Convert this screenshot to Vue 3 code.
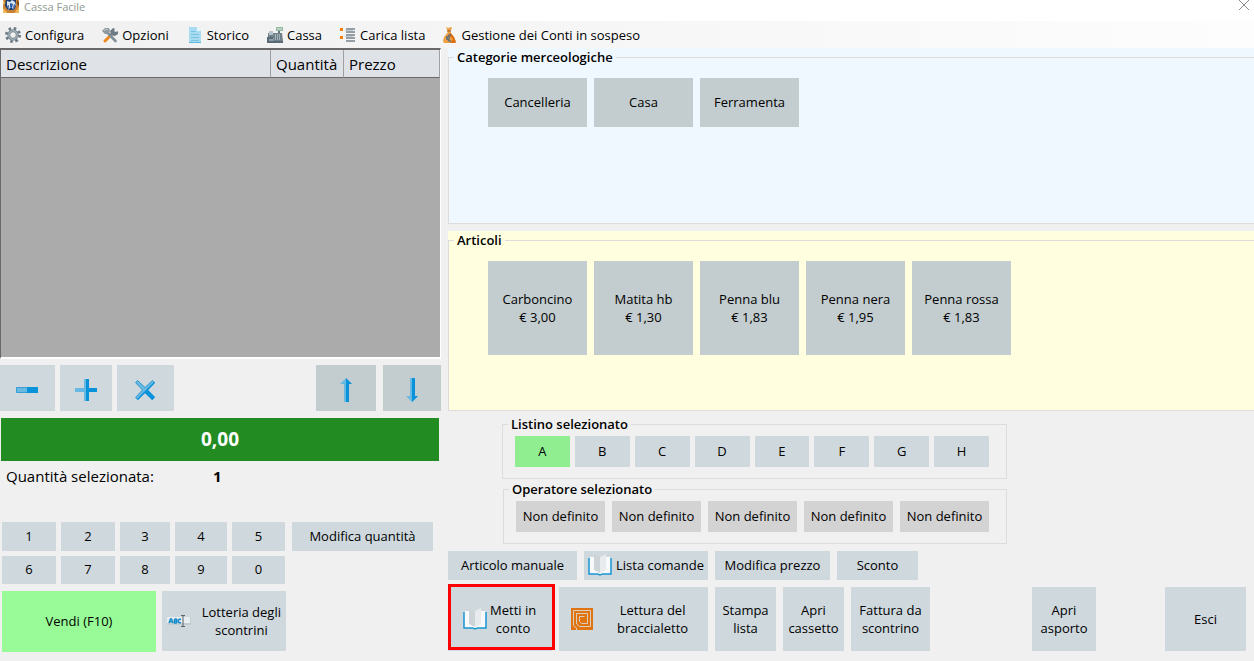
<script setup>
import { ref } from 'vue'

const categories = ['Cancelleria', 'Casa', 'Ferramenta']
const articles = [
  { name: 'Carboncino', price: '€ 3,00' },
  { name: 'Matita hb', price: '€ 1,30' },
  { name: 'Penna blu', price: '€ 1,83' },
  { name: 'Penna nera', price: '€ 1,95' },
  { name: 'Penna rossa', price: '€ 1,83' },
]
const priceLists = ['A', 'B', 'C', 'D', 'E', 'F', 'G', 'H']
const activeList = ref('A')
const operators = Array(5).fill('Non definito')
const digits = ['1', '2', '3', '4', '5', '6', '7', '8', '9', '0']
</script>

<template>
  <div class="window">
    <header class="titlebar">
      <svg class="logo" width="16" height="16" viewBox="0 0 16 16" aria-hidden="true">
        <rect width="16" height="16" fill="#c98232" />
        <path d="M3 1h10v8l-2 4H5l-3-4z" fill="#1f3c6e" />
        <path d="M4 4l3 1 2-2 3 2 1 4-2-2-1 5-2-2-3 3 1-5-2 1z" fill="#d9e4f2" />
        <path d="M7 6l3 1-1 4-2-1z" fill="#2c5fa6" />
        <path d="M4 9l2 3M12 8l-2 5" stroke="#4d7ec0" />
        <path d="M0 11l4 4v1H0zM16 10l-4 5v1h4zM0 3l2 3-2 2z" fill="#f2b65b" />
        <path d="M14 3l2 3v3l-2-2z" fill="#6f4a1c" />
      </svg>
      <span>Cassa Facile</span>
      <button class="close" aria-label="Chiudi">
        <svg width="12" height="12" viewBox="0 0 12 12"><path d="M1 0l10 10M11 0L1 10" stroke="#8a8a8a" fill="none" /></svg>
      </button>
    </header>

    <nav class="menu">
      <button>
        <svg width="16" height="16" viewBox="0 0 16 16">
          <circle cx="8" cy="8" r="6.5" fill="none" stroke="#6b7a84" stroke-width="3" stroke-dasharray="2.5 2.6" />
          <circle cx="8" cy="8" r="4.2" fill="none" stroke="#7b8a94" stroke-width="3" />
          <circle cx="8" cy="8" r="4.2" fill="none" stroke="#b3bec5" stroke-width="1" />
        </svg>
        Configura
      </button>
      <button>
        <svg width="16" height="16" viewBox="0 0 16 16">
          <path d="M3 14l7-7" stroke="#ee8a1d" stroke-width="3" stroke-linecap="round" />
          <path d="M5 5l8.500 9" stroke="#7f8e97" stroke-width="2.600" stroke-linecap="round" />
          <path d="M0 4l3-3 4 0 1 3-2 3-3 0z" fill="#8b999f" />
          <path d="M2 4l2-2 2 1" fill="none" stroke="#c0c9cd" />
          <path d="M8 4l3-3 2 1-1 2 2 1 2-1v3l-3 2-4-1z" fill="#6c7b84" />
        </svg>
        Opzioni
      </button>
      <button>
        <svg width="16" height="16" viewBox="0 0 16 16">
          <path d="M2 0h8l4 4v12H2z" fill="#a9dcf1" />
          <path d="M10 0v4h4z" fill="#e7f7fd" />
          <path d="M4 4.500h5M4 7.500h8M4 10.500h8M4 13.500h8" stroke="#78c3e2" />
          <path d="M2 15.500h12" stroke="#58b7dd" />
        </svg>
        Storico
      </button>
      <button>
        <svg width="16" height="16" viewBox="0 0 16 16">
          <rect x="9" y="0" width="7" height="4" fill="#91b8a0" />
          <path d="M10 2h5" stroke="#d9eddf" />
          <path d="M11 4h2v2h-2z" fill="#65747c" />
          <path d="M1 6h6v5H1zM7 6h8l1 8H6z" fill="#71818a" />
          <path d="M2 4h4v4H2z" fill="#b8c5cc" />
          <path d="M8 8h6M8 10h6M8 12h6" stroke="#d6e1e6" stroke-dasharray="1 1" />
          <path d="M0 10h6v4h10v2H0z" fill="#596b76" />
          <path d="M2 13h4" stroke="#c9d5da" />
        </svg>
        Cassa
      </button>
      <button>
        <svg width="16" height="16" viewBox="0 0 16 16">
          <path d="M0 1h3v3H0zM0 9h3v3H0z" fill="#ef7d0e" />
          <path d="M6 2h9M6 5h9M6 8h9M6 11h9M6 14h9" stroke="#75838b" stroke-width="1.500" />
          <path d="M5 3.500h8M5 9.500h8" stroke="#c4cdd1" />
        </svg>
        Carica lista
      </button>
      <button class="accounts">
        <svg width="13" height="16" viewBox="0 0 13 16">
          <path d="M3 0l2 1 3-1 1 1-2 4 4 5 2 5-1 1H1l-1-2 1-4 4-5z" fill="#efa044" />
          <path d="M7 5l4 5 2 5-1 1H7l3-4-4-3z" fill="#dc7214" />
          <path d="M4 4h4" stroke="#925016" />
          <path d="M8 8H6l-2 3 2 3h2M3 10h4M3 12h4" fill="none" stroke="#66717a" stroke-width="1.300" />
        </svg>
        Gestione dei Conti in sospeso
      </button>
    </nav>

    <main class="body">
      <section class="receipt">
        <div class="grid-view">
          <table>
            <colgroup><col /><col class="col-qty" /><col class="col-price" /></colgroup>
            <thead>
              <tr><th scope="col">Descrizione</th><th scope="col">Quantità</th><th scope="col">Prezzo</th></tr>
            </thead>
            <tbody></tbody>
          </table>
        </div>

        <div class="tools">
          <button class="btn t1" aria-label="Diminuisci">
            <svg width="24" height="24" viewBox="0 0 24 24">
              <path d="M1.500 9.500h21v5h-21z" fill="#68b9e1" stroke="#389fd5" />
              <path d="M12 9h11v6H12z" fill="#0792da" />
            </svg>
          </button>
          <button class="btn t2" aria-label="Aumenta">
            <svg width="24" height="24" viewBox="0 0 24 24">
              <path d="M10 1h5v9h8v4h-8v9h-5v-9H1v-4h9z" fill="#68b9e1" />
              <path d="M12 1h3v9h8v4h-8v9h-3z" fill="#0792da" />
            </svg>
          </button>
          <button class="btn t3" aria-label="Elimina">
            <svg width="24" height="24" viewBox="0 0 24 24">
              <path d="M4.500 2.500l7.500 7 7.500-7 2 2-7 7.500 7 7.500-2 2-7.500-7-7.500 7-2-2 7-7.500-7-7.500z" fill="#68b9e1" stroke="#2c98d2" />
              <path d="M21 4l1 1-7 7 7 7-3 3-7-7-7 7-1-1z" fill="#0792da" />
            </svg>
          </button>
          <button class="btn steel t4" aria-label="Su">
            <svg width="24" height="26" viewBox="0 0 24 26">
              <path d="M12 1l6 6h-3v18h-5V7H6z" fill="#68b9e1" />
              <path d="M12 1l6 6h-3v18h-3z" fill="#0792da" />
            </svg>
          </button>
          <button class="btn steel t5" aria-label="Giù">
            <svg width="24" height="26" viewBox="0 0 24 26">
              <path d="M12 25l6-6h-3V1h-5v18H6z" fill="#68b9e1" />
              <path d="M12 25l6-6h-3V1h-3z" fill="#0792da" />
            </svg>
          </button>
        </div>

        <output class="total">0,00</output>
        <p class="quantity"><span>Quantità selezionata:</span><strong>1</strong></p>

        <div class="keys">
          <div class="pad">
            <button v-for="d in digits" :key="d" class="btn">{{ d }}</button>
          </div>
          <button class="btn modify">Modifica quantità</button>
        </div>

        <div class="sell">
          <button class="btn vendi">Vendi (F10)</button>
          <button class="btn lottery">
            <svg width="24" height="14" viewBox="0 0 24 14">
              <path d="M0 3h24v8H0z" fill="#c2cdcf" />
              <path d="M0 3h23v6H0z" fill="#e8edef" />
              <path d="M2 9l1.500-4h1L6 9M3 7.700h2M7.500 5v4H9q2-1 0-2H7.500M7.500 5H9q2 1 0 2M14 5.500q-2.500-1-2.500 1.500t2.500 1.500" fill="none" stroke="#168bc7" stroke-width="1.500" />
              <path d="M14 1.500h4M14 12.500h4M16 1v12" stroke="#58626b" />
            </svg>
            <span>Lotteria degli<br />scontrini</span>
          </button>
        </div>
      </section>

      <section class="catalog">
        <div class="panel blue">
          <fieldset>
            <legend>Categorie merceologiche</legend>
            <div class="tiles">
              <button v-for="c in categories" :key="c" class="btn steel category">{{ c }}</button>
            </div>
          </fieldset>
        </div>

        <div class="panel yellow">
          <fieldset>
            <legend>Articoli</legend>
            <div class="tiles">
              <button v-for="a in articles" :key="a.name" class="btn steel article">{{ a.name }}<br />{{ a.price }}</button>
            </div>
          </fieldset>
        </div>

        <fieldset class="choice">
          <legend>Listino selezionato</legend>
          <div class="lists">
            <button v-for="l in priceLists" :key="l" class="btn" :class="{ active: l === activeList }" @click="activeList = l">{{ l }}</button>
          </div>
        </fieldset>

        <fieldset class="choice">
          <legend>Operatore selezionato</legend>
          <div class="operators">
            <button v-for="(o, i) in operators" :key="i" class="btn">{{ o }}</button>
          </div>
        </fieldset>

        <div class="row short">
          <button class="btn a1">Articolo manuale</button>
          <button class="btn a2">
            <svg width="24" height="24" viewBox="0 0 24 24">
              <path d="M1 5v16h9l2 1 2-1h9V5" fill="#fafcfd" stroke="#1995d2" stroke-width="1.500" />
              <path d="M2 4h4l6 3 6-3h4v16h-8l-2 1-2-1H2z" fill="#f7f9fa" />
              <path d="M6 1l6 3v16l-6-3z" fill="#cdd4d7" />
              <path d="M12 4l6-3v16l-6 3z" fill="#e7ebed" />
            </svg>
            Lista comande
          </button>
          <button class="btn a3">Modifica prezzo</button>
          <button class="btn a4">Sconto</button>
        </div>

        <div class="row tall">
          <button class="btn b1">
            <svg width="24" height="24" viewBox="0 0 24 24">
              <path d="M1 5v16h9l2 1 2-1h9V5" fill="#fafcfd" stroke="#1995d2" stroke-width="1.500" />
              <path d="M2 4h4l6 3 6-3h4v16h-8l-2 1-2-1H2z" fill="#f7f9fa" />
              <path d="M6 1l6 3v16l-6-3z" fill="#cdd4d7" />
              <path d="M12 4l6-3v16l-6 3z" fill="#e7ebed" />
            </svg>
            <span>Metti in<br />conto</span>
          </button>
          <button class="btn b2">
            <svg width="22" height="22" viewBox="0 0 22 22">
              <path d="M0 0h22v22H0z" fill="#df7410" />
              <path d="M5.500 22v-2l-3-2.500v-15h17v16h-11l-3-2.500V5.500h11v10h-6l-2-2v-5h5" fill="none" stroke="#dccfc0" />
            </svg>
            <span>Lettura del<br />braccialetto</span>
          </button>
          <button class="btn b3">Stampa<br />lista</button>
          <button class="btn b3">Apri<br />cassetto</button>
          <button class="btn b4">Fattura da<br />scontrino</button>
          <button class="btn b5">Apri<br />asporto</button>
          <button class="btn b6">Esci</button>
        </div>
      </section>
    </main>
  </div>
</template>

<style>
body {
  margin: 0;
  background: #f0f0f0;
}
</style>

<style scoped>
.window {
  min-height: 100vh;
  display: flex;
  flex-direction: column;
  background: #f0f0f0;
  color: #000;
  font: 13px/18px "Open Sans", "Noto Sans", sans-serif;
}
.window *, .window *::after {
  box-sizing: border-box;
}
button {
  border: 0;
  padding: 0;
  background: none;
  color: inherit;
  font: inherit;
}
svg {
  display: block;
  flex: none;
}
.titlebar {
  height: 21px;
  display: flex;
  align-items: flex-start;
  gap: 5px;
  padding-left: 3px;
  background: #fff;
  color: #8f9a94;
  font-size: 11px;
  line-height: 13px;
}
.logo {
  margin-top: -3px;
}
.close {
  margin-left: auto;
  margin-right: 4px;
}
.menu {
  height: 27px;
  display: flex;
  align-items: center;
  gap: 18px;
  padding-left: 5px;
  background: linear-gradient(90deg, #f0f0f0, #fdfdfd);
}
.menu button {
  display: flex;
  align-items: center;
  gap: 4px;
  white-space: nowrap;
}
.menu .accounts {
  gap: 5px;
}
.body {
  flex: 1;
  display: grid;
  grid-template-columns: 441px minmax(0, 1fr);
  gap: 7px;
}
.receipt {
  display: flex;
  flex-direction: column;
}
.grid-view {
  height: 311px;
  border: 2px solid;
  border-width: 2px 1px 2px 1px;
  border-color: #696969 #fff #fff #696969;
  background: #ababab;
}
table {
  width: 100%;
  table-layout: fixed;
  border-collapse: separate;
  border-spacing: 0;
}
.col-qty {
  width: 73px;
}
.col-price {
  width: 96px;
}
th {
  height: 28px;
  padding: 0 0 0 5px;
  border-right: 1px solid #a0a0a0;
  border-bottom: 1px solid #696969;
  background: #dfe3e8;
  font-size: 15px;
  font-weight: 400;
  text-align: left;
}
.btn {
  padding-bottom: 2px;
  background: #cfd8dd;
}
.steel {
  background: #c3cdcf;
}
.tools {
  display: flex;
  gap: 5px;
  height: 46px;
  margin-top: 6px;
}
.tools .btn {
  display: flex;
  align-items: center;
  justify-content: center;
  padding: 4px 1px 0 0;
}
.t1 { width: 55px; }
.t2 { width: 52px; }
.t3 { width: 57px; }
.t4 { width: 60px; margin-left: auto; }
.t5 { width: 58px; margin-left: 2px; }
.total {
  margin: 7px 2px 0 1px;
  background: #228b22;
  color: #fff;
  font-size: 19px;
  font-weight: 700;
  line-height: 43px;
  text-align: center;
}
.quantity {
  display: flex;
  margin: 5px 0 36px 6px;
  font-size: 15px;
  line-height: 20px;
}
.quantity span {
  width: 207px;
}
.keys {
  display: flex;
  gap: 7px;
  padding: 0 8px 0 2px;
}
.pad {
  display: grid;
  grid-template-columns: 54px 54px 50px 52px 53px;
  grid-template-rows: 29px 28px;
  gap: 5px;
}
.modify {
  flex: 1;
  height: 29px;
}
.sell {
  display: flex;
  align-items: flex-start;
  gap: 6px;
  margin-top: 7px;
  padding-left: 2px;
}
.vendi {
  width: 154px;
  height: 61px;
  background: #98fb98;
}
.lottery {
  width: 124px;
  height: 60px;
  display: flex;
  align-items: center;
  justify-content: space-between;
  padding: 0 5px;
}
.catalog {
  min-width: 0;
}
fieldset {
  min-width: 0;
  margin: 0;
  padding: 0;
  border: 1px solid #dcdcdc;
}
legend {
  margin-left: 5px;
  padding: 0 3px;
  font-weight: 600;
}
.panel fieldset {
  border-right: 0;
}
.blue {
  background: #f0f8ff;
}
.blue fieldset {
  height: 176px;
}
.yellow {
  margin-top: 7px;
  background: #ffffe0;
}
.yellow fieldset {
  height: 180px;
}
.tiles {
  display: flex;
  flex-wrap: wrap;
  gap: 7px;
  padding: 12px 0 0 39px;
}
.category {
  width: 99px;
  height: 49px;
}
.article {
  width: 99px;
  height: 94px;
  padding: 0;
}
.choice {
  width: 505px;
  height: 64px;
  margin: 4px 0 0 54px;
}
.choice + .choice {
  width: 504px;
  margin: 1px 0 0 55px;
}
.lists {
  display: grid;
  grid-template-columns: repeat(8, 1fr);
  gap: 5px;
  padding: 3px 17px 0 12px;
}
.lists .btn {
  height: 31px;
}
.lists .active {
  background: #90ee90;
}
.operators {
  display: flex;
  gap: 7px;
  padding: 3px 0 0 12px;
}
.operators .btn {
  width: 89px;
  height: 31px;
  background: #d3d3d3;
}
.row {
  display: flex;
  gap: 7px;
}
.short {
  margin-top: 7px;
}
.short .btn {
  height: 29px;
}
.tall {
  margin-top: 7px;
}
.tall .btn {
  height: 64px;
  padding-bottom: 0;
}
.a1 { width: 129px; }
.a2 {
  width: 124px;
  display: flex;
  align-items: center;
  gap: 4px;
  padding-left: 4px;
}
.a3 { width: 115px; }
.a4 { width: 81px; }
.b1 {
  position: relative;
  width: 104px;
  display: flex;
  align-items: center;
  gap: 3px;
  padding-left: 15px;
}
.b1::after {
  content: "";
  position: absolute;
  inset: -3px -3px 1px 0;
  border: 3px solid #f00;
}
.b2 {
  width: 149px;
  display: flex;
  align-items: center;
  gap: 24px;
  padding-left: 12px;
}
.b3 { width: 61px; }
.b4 { width: 79px; }
.b5 { width: 64px; margin-left: auto; }
.b6 { width: 81px; margin: 0 8px 0 62px; }
</style>
